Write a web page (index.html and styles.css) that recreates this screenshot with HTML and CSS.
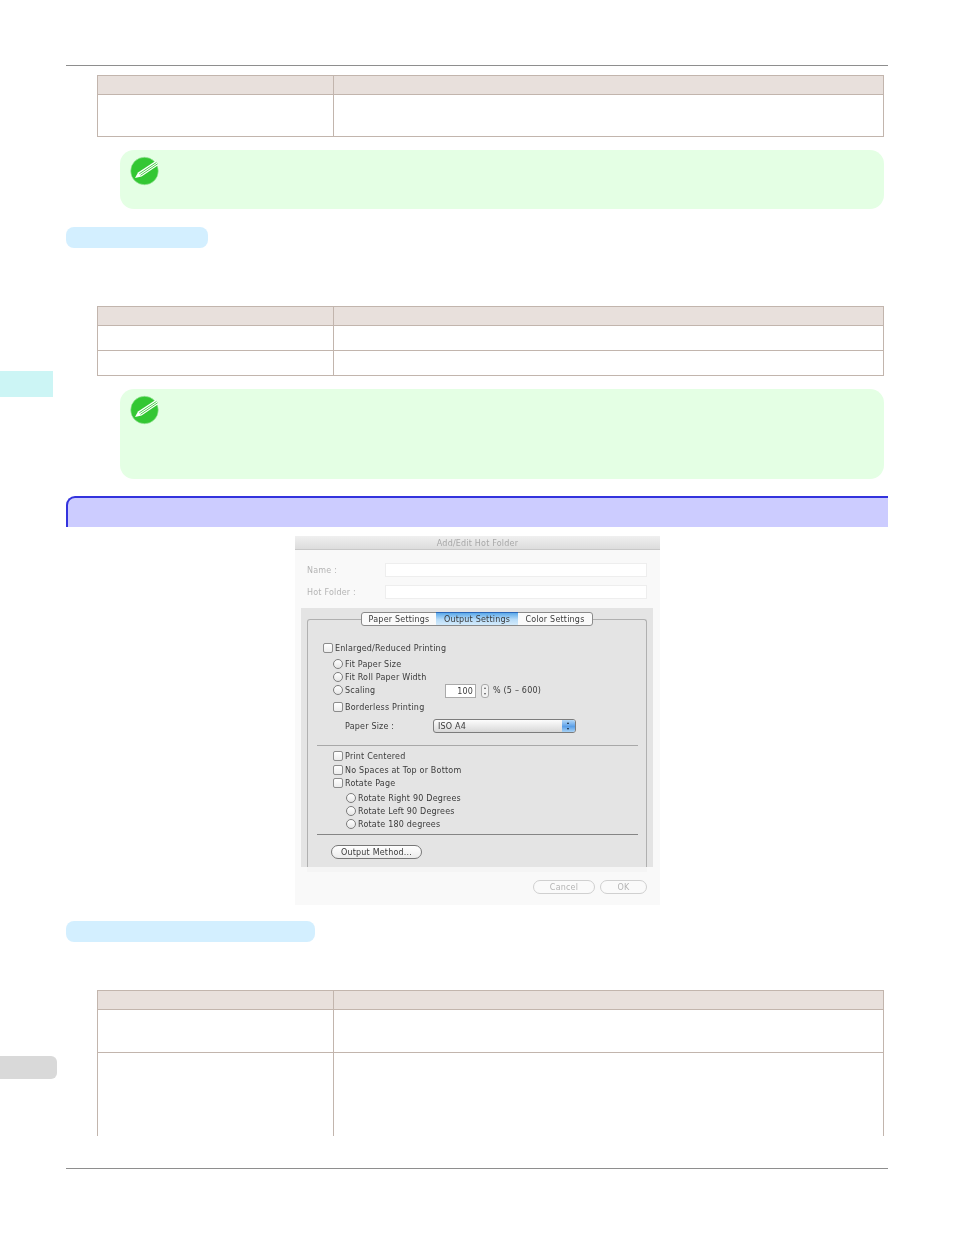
FILE: index.html
```html
<!DOCTYPE html>
<html lang="en">
<head>
<meta charset="utf-8">
<title>Add/Edit Hot Folder</title>
<link rel="stylesheet" href="styles.css">
</head>
<body>
<div class="side-tab side-tab-cyan"></div>
<div class="side-tab side-tab-gray"></div>
<main class="page">
  <hr class="rule rule-top">
  <table class="spec spec-1">
    <tr class="row-head"><th></th><th></th></tr>
    <tr class="row-42"><td></td><td></td></tr>
  </table>
  <section class="note note-1">
    <svg class="note-icon" viewBox="0 0 30 30" aria-hidden="true">
      <circle cx="14.5" cy="15" r="13.8" fill="#33c733" stroke="#a8e8a8" stroke-width=".6"/>
      <path d="M5 22 L8 16.500 L25.500 5 L28.500 9 L11.500 20.500 Z" fill="#fff"/>
      <path d="M9.300 17.800 L26.500 6.400 M10.500 19.300 L27.600 7.800" stroke="#33c733" stroke-width=".9" fill="none"/>
    </svg>
  </section>
  <div class="pill pill-1"></div>
  <table class="spec spec-2">
    <tr class="row-head"><th></th><th></th></tr>
    <tr class="row-25"><td></td><td></td></tr>
    <tr class="row-25"><td></td><td></td></tr>
  </table>
  <section class="note note-2">
    <svg class="note-icon" viewBox="0 0 30 30" aria-hidden="true">
      <circle cx="14.5" cy="15" r="13.8" fill="#33c733" stroke="#a8e8a8" stroke-width=".6"/>
      <path d="M5 22 L8 16.500 L25.500 5 L28.500 9 L11.500 20.500 Z" fill="#fff"/>
      <path d="M9.300 17.800 L26.500 6.400 M10.500 19.300 L27.600 7.800" stroke="#33c733" stroke-width=".9" fill="none"/>
    </svg>
  </section>
  <div class="heading"></div>

  <div class="dialog">
    <div class="title-bar">Add/Edit Hot Folder</div>
    <div class="field field-name"><span class="field-label">Name :</span><span class="field-input"></span></div>
    <div class="field field-folder"><span class="field-label">Hot Folder :</span><span class="field-input"></span></div>
    <div class="panel">
      <div class="tabs">
        <span class="tab">Paper Settings</span>
        <span class="tab tab-active">Output Settings</span>
        <span class="tab">Color Settings</span>
      </div>
      <div class="group">
        <div class="opt opt-enlarge"><span class="check"></span>Enlarged/Reduced Printing</div>
        <div class="opt opt-sub opt-first"><span class="radio"></span>Fit Paper Size</div>
        <div class="opt opt-sub"><span class="radio"></span>Fit Roll Paper Width</div>
        <div class="opt opt-sub">
          <span class="radio"></span><span class="scaling-label">Scaling</span>
          <span class="num-input">100</span>
          <span class="stepper"><i class="up"></i><i class="down"></i></span>
          <span class="range">% (5 – 600)</span>
        </div>
        <div class="opt opt-sub opt-border"><span class="check"></span>Borderless Printing</div>
        <div class="opt opt-size">
          <span class="size-label">Paper Size :</span>
          <span class="select"><span class="select-text">ISO A4</span><span class="select-arrows"><i class="up"></i><i class="down"></i></span></span>
        </div>
        <hr class="sep sep-1">
        <div class="opt opt-sub opt-print"><span class="check"></span>Print Centered</div>
        <div class="opt opt-sub opt-tight"><span class="check"></span>No Spaces at Top or Bottom</div>
        <div class="opt opt-sub"><span class="check"></span>Rotate Page</div>
        <div class="opt opt-sub2 opt-r1"><span class="radio"></span>Rotate Right 90 Degrees</div>
        <div class="opt opt-sub2"><span class="radio"></span>Rotate Left 90 Degrees</div>
        <div class="opt opt-sub2"><span class="radio"></span>Rotate 180 degrees</div>
        <hr class="sep sep-2">
        <span class="btn btn-output">Output Method...</span>
      </div>
    </div>
    <div class="actions">
      <span class="btn btn-off btn-cancel">Cancel</span>
      <span class="btn btn-off btn-ok">OK</span>
    </div>
  </div>

  <div class="pill pill-2"></div>
  <table class="spec spec-3">
    <tr class="row-head"><th></th><th></th></tr>
    <tr class="row-43"><td></td><td></td></tr>
    <tr class="row-84"><td></td><td></td></tr>
  </table>
  <hr class="rule rule-bottom">
</main>
</body>
</html>
```
FILE: styles.css
```css
* { box-sizing: border-box; }
html, body { margin: 0; padding: 0; background: #fff; }
body { font-family: "DejaVu Sans", sans-serif; height: 1235px; overflow: hidden; position: relative; }

.page { margin-left: 66px; width: 822px; padding-top: 65px; display: flow-root; }

.rule { display: block; margin: 0; border: 0; height: 1px; background: #8e8e8e; }
.rule-bottom { margin-top: 32px; }

.side-tab { position: absolute; left: 0; }
.side-tab-cyan { top: 371px; width: 53px; height: 26px; background: #ccf5f5; }
.side-tab-gray { top: 1056px; width: 57px; height: 23px; background: #d9d9d9; border-radius: 0 6px 6px 0; }

.spec { border-collapse: collapse; table-layout: fixed; width: 787px; margin-left: 31px; }
.spec th, .spec td { padding: 0; border: 1px solid #c2b5ad; }
.spec th { background: #e8e0dc; }
.spec th:first-child, .spec td:first-child { width: 236px; }
.row-head th { height: 19px; }
.row-25 td { height: 25px; }
.row-42 td { height: 42px; }
.row-43 td { height: 43px; }
.row-84 td { height: 83px; border-bottom: 0; }
.spec-1 { margin-top: 9px; }
.spec-2 { margin-top: 58px; }
.spec-3 { margin-top: 48px; }

.note { margin: 13px 0 0 54px; width: 763.5px; background: #e4ffe4; border-radius: 14px; padding: 6px 10px; }
.note-1 { height: 59px; }
.note-2 { height: 90px; }
.note-icon { display: block; width: 30px; height: 30px; }

.pill { height: 21px; background: #d3efff; border-radius: 8px; }
.pill-1 { width: 142px; margin-top: 18px; }
.pill-2 { width: 249px; margin-top: 16px; }

.heading { margin-top: 17px; height: 31px; background: #ccccff; border: solid #3333dd; border-width: 2px 0 0 2px; border-top-left-radius: 9px; }

.dialog { margin: 9px 0 0 229px; width: 365px; height: 369px; background: #f9f9f9; font-size: 8px; letter-spacing: .2px; line-height: 13px; color: #3a3a3a; filter: blur(.35px); display: flow-root; }

.title-bar { height: 14px; text-align: center; color: #a8a8a8; background: linear-gradient(#f0f0f0, #dcdcdc); border-bottom: 1px solid #c8c8c8; line-height: 15px; }

.field { display: flex; align-items: center; padding: 0 13px 0 12px; height: 14px; color: #b4b4b4; }
.field-name { margin-top: 13px; }
.field-folder { margin-top: 8px; }
.field-folder .field-label { padding-top: 1px; }
.field-label { width: 78px; }
.field-input { flex: 1; height: 100%; background: #fff; border: 1px solid #eee; }

.panel { position: relative; margin: 9px 7px 0 6px; height: 259px; background: #e4e4e4; padding: 11px 6px 0; }
.panel::after { content: ""; position: absolute; top: 100%; left: 6px; right: 6px; height: 5px; background: #f5f5f5; }

.tabs { position: absolute; top: 4px; left: 60px; width: 232px; height: 14px; display: flex; background: #fafafa; border: 1px solid #8a8a8a; border-radius: 3px; text-align: center; line-height: 14px; z-index: 1; }
.tab { flex: 0 0 74px; }
.tab-active { flex: 0 0 82px; background: linear-gradient(#5ba9ea, #b8dcf8 55%, #d3eafb); border-top: 1px solid #2a66b8; margin-top: -1px; line-height: 14px; }
.tab:last-child { flex: 1; }

.group { height: 248px; border: 1px solid #b0b0b0; border-bottom: 0; border-radius: 3px 3px 0 0; padding: 0 8px 0 10px; display: flow-root; }

.opt { display: flex; align-items: center; height: 13px; white-space: nowrap; }
.opt-enlarge { margin: 22px 0 0 5px; }
.opt-sub { margin-left: 15px; }
.opt-sub2 { margin-left: 28px; }
.opt-first { margin-top: 3px; }
.opt-border { margin-top: 4px; }
.opt-size { margin: 5px 0 0 27px; height: 14px; }
.opt-print { margin-top: 4px; }
.opt-tight { margin-top: 1px; }
.opt-r1 { margin-top: 2px; }

.check { flex: none; width: 10px; height: 10px; margin: 0 2px 2px 0; background: linear-gradient(#fff, #ececec); border: 1px solid #8c8c8c; border-radius: 2px; }
.radio { flex: none; width: 10px; height: 10px; margin: 0 2px 2px 0; background: linear-gradient(#fff, #e6e6e6); border: 1px solid #7c7c7c; border-radius: 50%; }

.scaling-label { width: 100px; }
.num-input { width: 31px; height: 14px; margin-right: 5px; background: #fff; border: 1px solid #aaa; text-align: right; padding-right: 2px; line-height: 14px; }
.stepper { position: relative; width: 8px; height: 14px; margin-right: 4px; background: #f2f2f2; border: 1px solid #aaa; border-radius: 3px; }
.up, .down { position: absolute; left: 50%; margin-left: -1.5px; border: solid transparent; border-width: 0 1.5px; }
.up { top: 2px; border-bottom: 2px solid #555; }
.down { bottom: 2px; border-top: 2px solid #555; }

.size-label { width: 88px; padding-top: 1px; }
.select { position: relative; width: 143px; height: 14px; background: linear-gradient(#fdfdfd, #d8d8d8); border: 1px solid #7c7c7c; border-radius: 3px; line-height: 13px; display: flex; }
.select-text { flex: 1; padding-left: 4px; }
.select-arrows { position: relative; width: 13px; background: linear-gradient(#b4d8f7, #5a9fe8 55%, #a8d2f5); border-radius: 0 2px 2px 0; }
.select-arrows .up { border-bottom-color: #123; }
.select-arrows .down { border-top-color: #123; }

.sep { margin: 0 0 0 -1px; border: 0; height: 1px; width: 321px; }
.sep-1 { margin-top: 12px; background: #a8a8a8; }
.sep-2 { margin-top: 3px; background: #858585; }

.btn { display: block; height: 14px; text-align: center; line-height: 13px; background: linear-gradient(#fff, #ececec); border: 1px solid #777; border-radius: 7px; }
.btn-output { width: 91px; margin: 10px 0 0 13px; }
.actions { display: flex; justify-content: flex-end; gap: 5px; margin: 13px 13px 0 0; }
.btn-off { color: #b4b4b4; background: #fafafa; border-color: #d0d0d0; }
.btn-cancel { width: 62px; }
.btn-ok { width: 47px; }
```
